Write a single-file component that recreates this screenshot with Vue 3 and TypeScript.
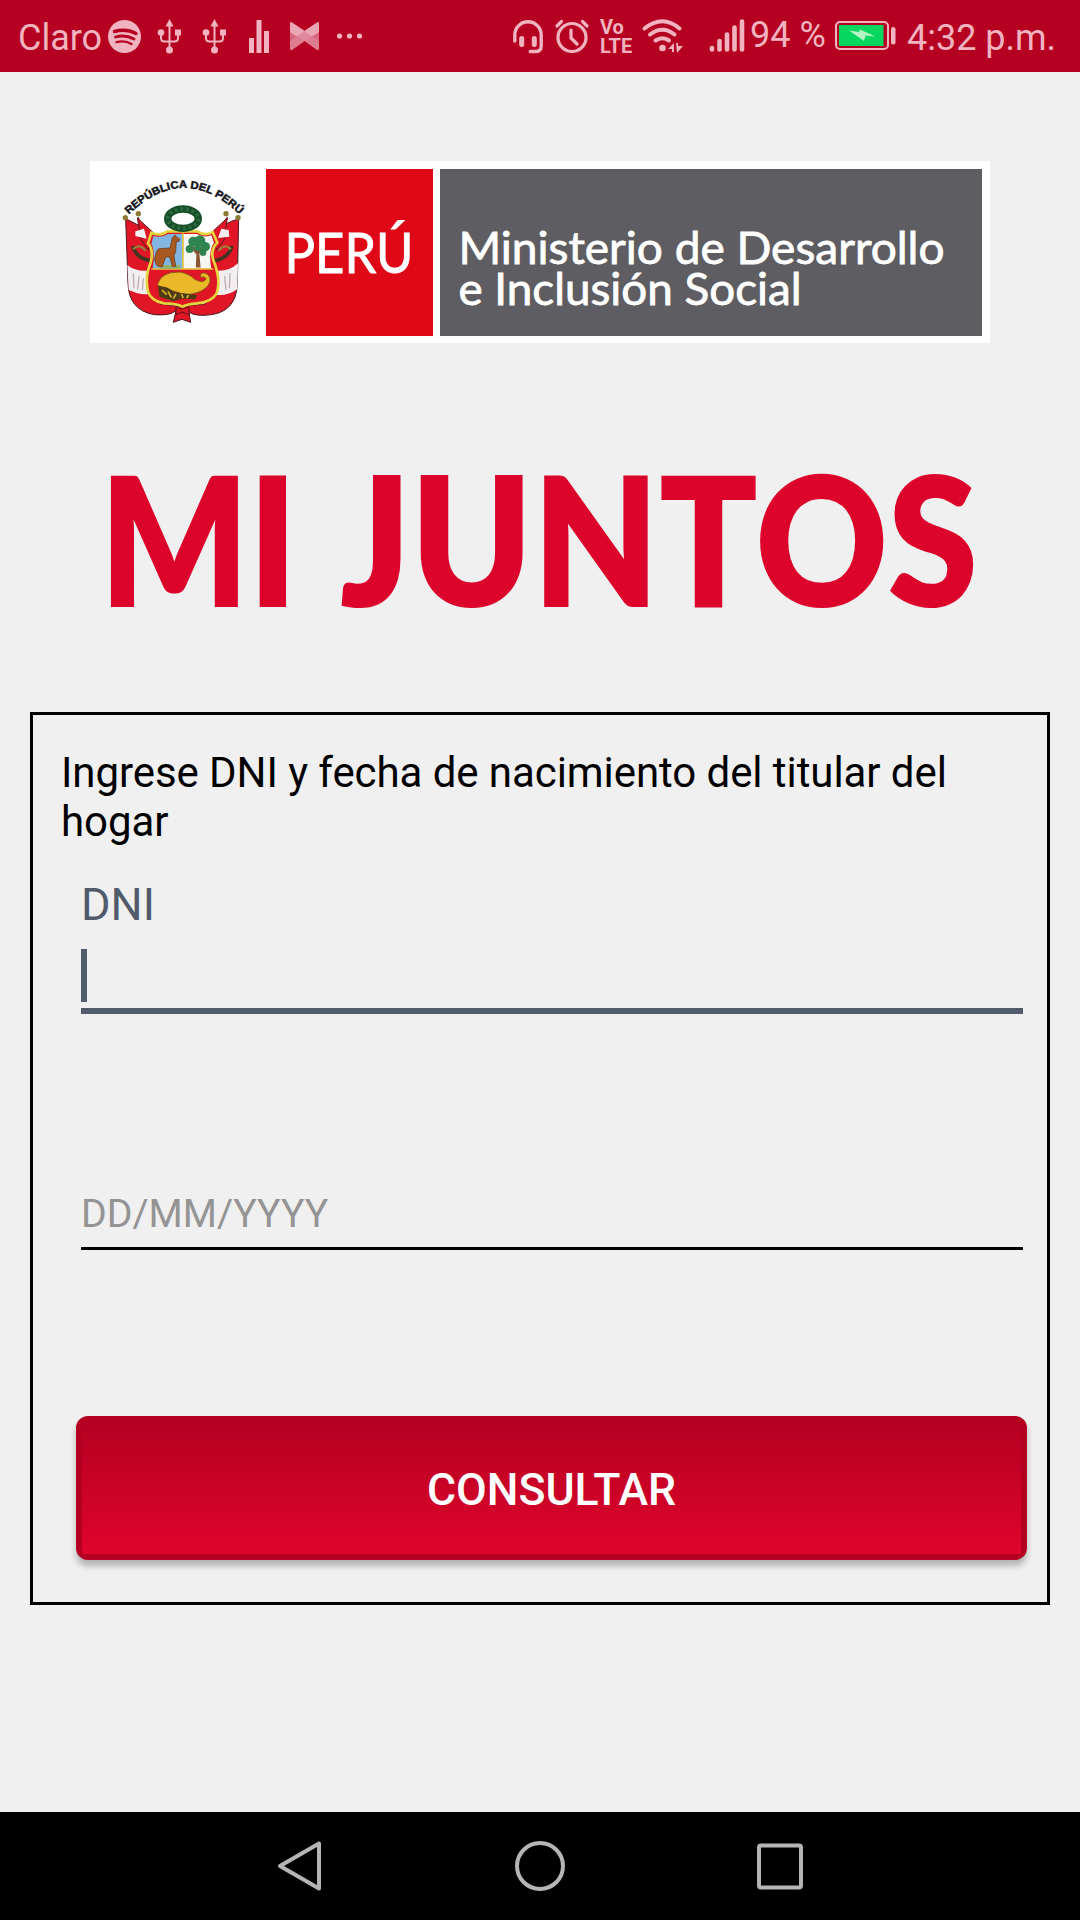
<script setup lang="ts">
import { ref } from 'vue';

const carrier = 'Claro';
const battery = '94 %';
const clock = '4:32 p.m.';

const dni = ref('');
const birthDate = ref('');

const signalBars = [
  { x: 3, top: 48 },
  { x: 10.5, top: 41 },
  { x: 18, top: 34.5 },
  { x: 25.5, top: 27.5 },
  { x: 33, top: 21.5 },
];
</script>

<template>
  <div class="screen">
    <header class="status">
      <div class="status__side">
        <span class="status__carrier">{{ carrier }}</span>
        <svg class="cell" viewBox="0 0 45 72">
          <circle cx="22.5" cy="36.5" r="16.5" fill="#f0b3bf" />
          <g fill="none" stroke="#b50021" stroke-linecap="round">
            <path d="M12.5 31.5c7-2 15-1.500 21.500 2" stroke-width="3.400" />
            <path d="M13.500 37c6-1.700 13-1 18.500 2" stroke-width="2.800" />
            <path d="M14.500 42.200c5-1.300 10.500-.8 15 1.800" stroke-width="2.300" />
          </g>
        </svg>
        <svg v-for="n in 2" :key="n" class="cell" viewBox="0 0 45 72">
          <g fill="none" stroke="#f0b3bf" stroke-width="2">
            <path d="M22.500 24v26M14 33v5q0 3.500 3.500 3.500h10q3.500 0 3.500-3.500v-5" />
          </g>
          <g fill="#f0b3bf">
            <path d="M22.500 19l4 7.500h-8z" />
            <circle cx="22.500" cy="50" r="3.500" />
            <circle cx="14" cy="32.500" r="3.300" />
            <path d="M28 29.500h6v6h-6z" />
          </g>
        </svg>
        <svg class="cell" viewBox="0 0 45 72" fill="#f0b3bf">
          <path d="M12 38h5v15h-5zM19.500 20h5v33h-5zM27 31h5v22h-5z" />
        </svg>
        <svg class="cell" viewBox="0 0 45 72">
          <path d="M8 24q0-3 2.500-1L22.500 31l12-8q2.500-2 2.500 1v24q0 3-2.500 1.500L22.500 41l-12 8.500Q8 51 8 48z" fill="#d9687f" />
          <path d="M8 24q0-3 2.500-1L22.500 31l12-8q2.500-2 2.500 1v8L22.500 41 8 32z" fill="#e18a9b" />
          <path d="M8 24q0-3 2.500-1L22.500 31 15 36.500 8 32zM37 24q0-3-2.500-1L22.500 31l7.500 5.500 7-4.500z" fill="#eba6b3" />
          <path d="M8 41l7-4.500 7.500 4.500-12 8.500Q8 51 8 48zM37 41l-7-4.500-7.500 4.500 12 8.500Q37 51 37 48z" fill="#de7d90" />
        </svg>
        <svg class="cell" viewBox="0 0 45 72" fill="#f0b3bf">
          <circle cx="12.500" cy="36" r="2.600" />
          <circle cx="22.500" cy="36" r="2.600" />
          <circle cx="32.500" cy="36" r="2.600" />
        </svg>
      </div>

      <div class="status__side">
        <svg class="cell cell--44" viewBox="0 0 44 72" fill="none" stroke="#f0b3bf" stroke-linecap="round">
          <path d="M8.800 41v-6a13.200 13.200 0 0 1 26.400 0v11q0 5.500-5 5.500h-6" stroke-width="3.400" />
          <path d="M15.700 38.500v6M28.300 38.500v6" stroke-width="5" />
        </svg>
        <svg class="cell cell--44" viewBox="0 0 44 72" fill="none" stroke="#f0b3bf" stroke-linecap="round">
          <circle cx="22" cy="37.500" r="14" stroke-width="3.200" />
          <path d="M21 30v8l6 6M7 26l4.500-4.500M37 26l-4.500-4.500" stroke-width="3.200" />
        </svg>
        <span class="volte"><span>Vo</span><span>LTE</span></span>
        <svg class="cell cell--wifi" viewBox="0 0 52 72">
          <g fill="none" stroke="#f0b3bf" stroke-width="4" stroke-linecap="round">
            <path d="M6.500 28.500Q24.500 14 41.500 28.500" />
            <path d="M12 34.500Q24.500 25 36.500 34.500" />
            <path d="M17.500 40.500Q24.500 36 31 40.500" />
          </g>
          <g fill="#f0b3bf">
            <circle cx="24.500" cy="48" r="3.300" />
            <path d="M36 43v9h-2v-3h-4zM38 43h2v3h5l-6 7z" />
          </g>
        </svg>
        <svg class="cell cell--signal" viewBox="0 0 36 72" stroke="#f0b3bf" stroke-width="4.600" stroke-linecap="round">
          <path v-for="bar in signalBars" :key="bar.x" :d="`M${bar.x} ${bar.top}V49.500`" />
        </svg>
        <span class="status__battery">{{ battery }}</span>
        <svg class="cell cell--battery" viewBox="0 0 62 72">
          <rect x="1" y="22" width="52" height="27" rx="4" fill="none" stroke="#f0b3bf" stroke-width="2" />
          <rect x="4" y="25" width="44.500" height="21" fill="#06d75e" />
          <path d="M14 30.500l10 1.500 1-2.500 15.500 7-10-1-1.500 5.500z" fill="#b5f3c5" />
          <rect x="56" y="27" width="4.500" height="17.500" rx="2.200" fill="#f0b3bf" />
        </svg>
        <span class="status__clock">{{ clock }}</span>
      </div>
    </header>

    <main class="content">
      <div class="banner">
        <svg class="crest" viewBox="30 33 528 546">
          <path id="crest-arc" d="M146 194Q310 36 475 190" fill="none" />
          <text class="crest__text">
            <textPath href="#crest-arc" textLength="378" lengthAdjust="spacingAndGlyphs">REPÚBLICA DEL PERÚ</textPath>
          </text>

          <!-- flags -->
          <path d="M137 206Q180 225 226 258L214 340 200 410 240 462Q290 468 308 470Q330 466 375 462L414 410 400 330 386 256Q430 220 476 206L472 400Q470 494 372 496Q330 496 326 482L332 517 306 508 280 517 288 482Q270 498 222 494Q146 480 144 400z" fill="#e01626" stroke="#4b1820" stroke-width="3" />
          <path d="M142 345Q165 365 205 362L200 410 208 432Q180 436 146 420zM474 340Q446 366 406 362L414 410 404 434Q440 440 472 418z" fill="#f3eff0" />
          <path d="M160 370l2 45M177 378l-4 40M190 385l-3 36M450 370l-2 45M434 378l4 42" stroke="#b9afb6" stroke-width="4" fill="none" />
          <path d="M174 202L196 262M442 202L416 262" stroke="#76222a" stroke-width="5" />
          <path d="M172 204L222 250 204 300 184 270zM442 204L392 250 410 300 432 270z" fill="#e01626" stroke="#5c1820" stroke-width="3" />
          <path d="M166 244l26-8 8 30-34-8zM446 240l-22-4-10 28 34-4z" fill="#f5eeee" />
          <path d="M158 288q10 36 52 44M456 288q-10 36-52 44" fill="none" stroke="#3f3521" stroke-width="11" />
          <path d="M160 298q16-20 38 4M452 298q-16-20-36 4" fill="none" stroke="#9c7a3c" stroke-width="7" />
          <g fill="#8d7a32">
            <circle cx="136" cy="203" r="8" /><circle cx="175" cy="191" r="8" />
            <circle cx="438" cy="191" r="8" /><circle cx="474" cy="203" r="8" />
          </g>

          <!-- shield -->
          <path d="M214 248Q244 260 262 244H352Q376 260 398 246Q406 264 412 278Q390 300 400 330Q424 390 410 430Q396 456 350 460Q322 462 308 470Q290 460 252 460Q212 452 204 424Q194 380 212 338Q222 300 204 280z" fill="#e01626" stroke="#e5d53e" stroke-width="8" />
          <path d="M220 258Q246 264 264 252H309V356H218Q226 300 214 282z" fill="#82b5df" />
          <path d="M309 252H350Q374 264 394 256L402 278Q384 304 394 356H309z" fill="#f6f6f2" />
          <path d="M309 250v106M214 357h186" stroke="#e5c540" stroke-width="5" />
          <path d="M240 356h60V345h-60z" fill="#8eb06b" />
          <path d="M277 263l9-8 4 7 9 5-2 7-8 1-2 30-5 12 5 32h-10l-8-28h-12l-10 29h-10l-7-4-7-18 7-24 6-8 34-2z" fill="#a95821" stroke="#613113" stroke-width="2" />
          <path d="M350 350l3-70 6 70zM333 290l20 24 18-24" fill="#8a5532" stroke="#8a5532" stroke-width="5" />
          <g fill="#2f8550">
            <circle cx="340" cy="275" r="15" /><circle cx="360" cy="272" r="16" />
            <circle cx="376" cy="290" r="14" /><circle cx="329" cy="297" r="12" />
            <circle cx="353" cy="294" r="10" /><circle cx="369" cy="308" r="10" />
          </g>
          <path d="M232 404Q244 364 300 366Q330 372 344 388Q372 402 378 386Q374 378 362 382Q358 368 374 369Q392 374 390 394Q384 418 350 428Q320 440 284 424Q250 420 232 404z" fill="#e9b928" stroke="#8a5a1c" stroke-width="3" />
          <path d="M234 408q30 0 48 18l70 10-6 12-42-2-24 8-42-14z" fill="#4d3c13" />
          <path d="M246 420l14 14M264 424l10 18M288 432l-8 14M304 432l6 12M326 436l-6 8" stroke="#d7b32f" stroke-width="5" />

          <!-- wreath -->
          <ellipse cx="309" cy="206" rx="46" ry="29" fill="none" stroke="#17502b" stroke-width="22" />
          <ellipse cx="309" cy="206" rx="46" ry="29" fill="none" stroke="#2a6c3d" stroke-width="11" stroke-dasharray="8 9" />
          <path d="M288 470l18 8 20-8 2 24-22-8-18 8z" fill="#e01626" stroke="#5c1218" stroke-width="3" />
        </svg>
        <svg class="banner__country" viewBox="0 0 167 167">
          <text x="18.500" y="103.500" textLength="129" lengthAdjust="spacingAndGlyphs">PERÚ</text>
        </svg>
        <svg class="banner__ministry" viewBox="0 0 542 167">
          <text x="18.500" y="95" textLength="486" lengthAdjust="spacingAndGlyphs">Ministerio de Desarrollo</text>
          <text x="18.500" y="136" textLength="343" lengthAdjust="spacingAndGlyphs">e Inclusión Social</text>
        </svg>
      </div>

      <h1 class="title">
        <svg class="title__art" viewBox="0 0 1080 220">
          <text x="100" y="176" textLength="197" lengthAdjust="spacingAndGlyphs">MI</text>
          <text x="340" y="176" textLength="638" lengthAdjust="spacingAndGlyphs">JUNTOS</text>
        </svg>
      </h1>

      <form class="card" @submit.prevent>
        <p class="card__hint">Ingrese DNI y fecha de nacimiento del titular del hogar</p>

        <label class="card__label" for="dni">DNI</label>
        <div class="field field--active">
          <span class="field__caret" />
          <input id="dni" v-model="dni" class="field__input" type="text" />
        </div>

        <div class="field field--date">
          <input v-model="birthDate" class="field__input" type="text" placeholder="DD/MM/YYYY" />
        </div>

        <button class="submit" type="submit">CONSULTAR</button>
      </form>
    </main>

    <nav class="nav">
      <svg viewBox="0 0 60 60"><path d="M49 7.500v45L10 30z" /></svg>
      <svg viewBox="0 0 60 60"><circle cx="30" cy="30" r="23" /></svg>
      <svg viewBox="0 0 60 60"><rect x="9" y="9.500" width="42" height="42" rx="2" /></svg>
    </nav>
  </div>
</template>

<style>
body {
  margin: 0;
  background: #f0f0f0;
}
</style>

<style scoped>
.screen {
  display: flex;
  flex-direction: column;
  width: 1080px;
  height: 1920px;
  overflow: hidden;
  background: #f0f0f0;
  font-family: Roboto, 'Liberation Sans', sans-serif;
}

.status {
  display: flex;
  justify-content: space-between;
  height: 72px;
  padding: 0 25px 0 18px;
  box-sizing: border-box;
  background: #b50021;
  color: #f0b3bf;
  font-size: 36px;
  line-height: 76px;
  white-space: nowrap;
}

.status__side {
  display: flex;
  height: 72px;
}

.status__carrier {
  width: 84px;
}

.status__battery {
  width: 85px;
  line-height: 70px;
}

.status__clock {
  width: 148px;
}

.cell {
  flex: none;
  width: 45px;
  height: 72px;
}

.cell--44 {
  width: 44px;
}

.cell--wifi {
  width: 52px;
  margin-right: 19px;
}

.cell--signal {
  width: 36px;
  margin-right: 5px;
}

.cell--battery {
  width: 62px;
  margin-right: 10px;
}

.volte {
  display: flex;
  flex-direction: column;
  width: 38px;
  padding: 18px 0 0 6px;
  font-size: 20px;
  font-weight: 700;
  line-height: 19px;
}

.content {
  display: flex;
  flex-direction: column;
  align-items: center;
  height: 1740px;
}

.banner {
  display: flex;
  gap: 7px;
  width: 900px;
  height: 182px;
  margin-top: 89px;
  background: #fff;
}

.crest {
  flex: none;
  width: 176px;
  height: 182px;
  margin-right: -7px;
}

.crest__text {
  fill: #15151a;
  stroke: #15151a;
  stroke-width: 1.5;
  font: 700 32px 'Liberation Sans', sans-serif;
}

.banner__country,
.banner__ministry {
  flex: none;
  height: 167px;
  margin-top: 8px;
  fill: #fff;
  stroke: #fff;
  stroke-width: 0.8;
  font-family: Lato, 'Liberation Sans', sans-serif;
}

.banner__country {
  width: 167px;
  background: #df0816;
  font-size: 56px;
}

.banner__ministry {
  width: 542px;
  background: #5e5d62;
  font-size: 44.5px;
}

.title {
  margin: 88px 0 0;
  height: 220px;
}

.title__art {
  display: block;
  width: 1080px;
  height: 220px;
  fill: #dc042b;
  font: 800 181px Lato, 'Liberation Sans', sans-serif;
}

.card {
  display: flex;
  flex-direction: column;
  width: 1020px;
  height: 893px;
  margin-top: 61px;
  padding: 33px 20px 0 27px;
  box-sizing: border-box;
  border: 3px solid #000;
}

.card__hint {
  margin: 0 0 0 1px;
  color: #000;
  font-size: 42px;
  letter-spacing: -0.07px;
  line-height: 49px;
}

.card__label {
  margin: 32px 0 0 21px;
  color: #525b6b;
  font-size: 45px;
  line-height: 54px;
}

.field {
  display: flex;
  align-items: flex-start;
  margin: 17px 4px 0 21px;
  border-bottom: 3px solid #000;
}

.field--active {
  height: 59px;
  border-bottom: 6px solid #525b6b;
}

.field__caret {
  width: 6px;
  height: 53px;
  background: #525b6b;
}

.field__input {
  flex: 1;
  min-width: 0;
  height: 53px;
  padding: 0;
  border: 0;
  outline: 0;
  background: transparent;
  font-family: inherit;
  font-size: 39.2px;
}

.field__input::placeholder {
  color: #949494;
  opacity: 1;
}

.field--date {
  height: 60px;
  margin-top: 173px;
}

.submit {
  height: 144px;
  margin: 166px 0 0 16px;
  padding: 4px 0 0;
  border: 0;
  border-radius: 12px;
  background:
    linear-gradient(#b30020, #df042c) 6px 0 / calc(100% - 12px) 138px no-repeat,
    #b30020;
  box-shadow: 0 6px 6px rgb(0 0 0 / 25%);
  color: #fff;
  font-family: inherit;
  font-size: 44.6px;
  font-weight: 500;
}

.nav {
  display: flex;
  justify-content: center;
  gap: 180px;
  height: 108px;
  background: #000;
}

.nav svg {
  width: 60px;
  height: 60px;
  margin-top: 24px;
  fill: none;
  stroke: #b5b5b5;
  stroke-width: 4;
  stroke-linejoin: round;
}
</style>
